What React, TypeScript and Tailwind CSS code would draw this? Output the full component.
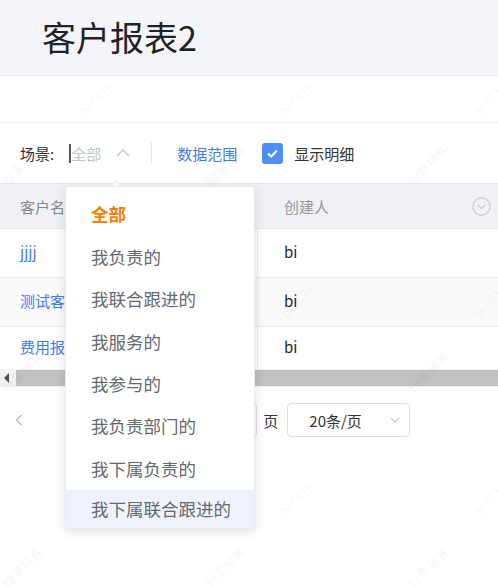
import React from "react";

const marks: { t: string; x: number; y: number; s: number }[] = [];
[99, 301, 499].forEach((y) => {
  [97, 297, 490].forEach((x) => marks.push({ t: "bi 5676", x, y, s: 12 }));
});
[165, 372, 567].forEach((y) => {
  [22, 225, 428].forEach((x) => marks.push({ t: "纷享销客", x, y, s: 13 }));
});

const items = [
  "我负责的",
  "我联合跟进的",
  "我服务的",
  "我参与的",
  "我负责部门的",
  "我下属负责的",
];

export default function App() {
  return (
    <div className="relative w-[498px] h-[587px] overflow-hidden bg-white font-['Noto_Sans_CJK_SC','Liberation_Sans',sans-serif]">
      {/* Header */}
      <div className="h-[76px] bg-[#f4f5f9] border-b border-[#e4e6ee] flex items-center pl-[42px] pb-[2px] text-[34px] text-[#1f2329] leading-none">
        客户报表2
      </div>
      <div className="h-[47px] border-b border-[#eceef4]" />

      {/* Toolbar */}
      <div className="h-[60px] flex items-center pl-5 text-[15px] leading-none">
        <span className="text-[#333]">场景:</span>
        <div className="ml-[15px] flex items-center">
          <span className="w-[2px] h-[19px] bg-[#555]" />
          <span className="text-[#c0c4cc]">全部</span>
          <svg className="ml-[15px]" width="14" height="14" viewBox="0 0 14 14" fill="none">
            <path d="M1 10 L7 4 L13 10" stroke="#c0c4cc" strokeWidth="1.3" />
          </svg>
        </div>
        <span className="ml-[21px] w-[1px] h-[22px] bg-[#e4e7ed]" />
        <span className="ml-[25px] text-[#3f7cf0]">数据范围</span>
        <span className="ml-[25px] w-[21px] h-[21px] rounded-[3px] bg-[#4e8ff5] flex items-center justify-center">
          <svg width="13" height="13" viewBox="0 0 13 13" fill="none">
            <path d="M2 6.5 L5.2 9.5 L11 3.5" stroke="white" strokeWidth="2" />
          </svg>
        </span>
        <span className="ml-[11px] text-[#333]">显示明细</span>
      </div>

      {/* Table */}
      <div className="text-[15px] leading-none">
        <div className="flex h-[45px] bg-[#f0f1f4] border-t border-[#e6e8ee] items-center">
          <div className="w-[258px] pl-5 text-[#888]">客户名称</div>
          <div className="flex-1 pl-[26px] text-[#999]">创建人</div>
          <svg className="mr-[7px]" width="19" height="19" viewBox="0 0 19 19" fill="none">
            <circle cx="9.5" cy="9.5" r="8.6" stroke="#c8cad0" strokeWidth="1.2" />
            <path d="M5.8 8 L9.5 11.6 L13.2 8" stroke="#c8cad0" strokeWidth="1.2" />
          </svg>
        </div>
        {[
          { n: "jjjj", bg: "bg-white", h: "h-[49px]" },
          { n: "测试客户", bg: "bg-[#fafafa]", h: "h-[49px]" },
          { n: "费用报销", bg: "bg-white", h: "h-[43px]" },
        ].map((r, i) => (
          <div key={i} className={`flex items-center border-t border-[#e6e9f0] ${r.bg} ${r.h}`}>
            <div className="w-[258px] h-full flex items-center pl-5 pb-[4px] text-[#3d7cf5] border-r border-[#ebedf2]">{r.n}</div>
            <div className="flex-1 pl-[26px] pb-[4px] text-[#1f2533]">bi</div>
          </div>
        ))}
        {/* Scrollbar */}
        <div className="h-[18px] bg-[#f1f1f1] flex items-center">
          <svg className="ml-[4px]" width="6" height="10" viewBox="0 0 6 10">
            <path d="M5 0 L0 5 L5 10 Z" fill="#505050" />
          </svg>
          <div className="ml-[6px] flex-1 h-[16px] bg-[#c1c1c1]" />
        </div>
      </div>

      {/* Pagination */}
      <div className="mt-[16px] h-[34px] flex items-center text-[15px] leading-none">
        <svg className="ml-[15px]" width="8" height="12" viewBox="0 0 8 12" fill="none">
          <path d="M6.5 1 L1.5 6 L6.5 11" stroke="#b3bccb" strokeWidth="1.4" />
        </svg>
        <span className="ml-[41px] text-[#ff8000]">1</span>
        <span className="ml-[140px] w-[45px] h-[34px] border border-[#dcdfe6] rounded-[4px]" />
        <span className="ml-[6px] text-[#333]">页</span>
        <div className="ml-[9px] w-[123px] h-[34px] border border-[#dcdfe6] rounded-[4px] flex items-center">
          <span className="ml-[21px] text-[#333]">20条/页</span>
          <svg className="ml-auto mr-[9px]" width="10" height="8" viewBox="0 0 10 8" fill="none">
            <path d="M1 2 L5 6 L9 2" stroke="#c0c4cc" strokeWidth="1.1" />
          </svg>
        </div>
      </div>

      {/* Watermarks */}
      <div className="pointer-events-none absolute inset-0 z-10">
        {marks.map((m, i) => (
          <span
            key={i}
            className="absolute whitespace-nowrap text-[rgba(0,0,0,0.06)] leading-none -translate-x-1/2 -translate-y-1/2 -rotate-45"
            style={{ left: m.x, top: m.y, fontSize: m.s }}
          >
            {m.t}
          </span>
        ))}
      </div>

      {/* Dropdown */}
      <div className="absolute left-[65px] top-[186px] z-20 w-[190px]">
        <span className="absolute left-[46px] top-[-4px] w-[10px] h-[10px] bg-white rotate-45 border-l border-t border-[#e9ebf0]" />
        <div className="relative h-[343px] overflow-hidden bg-white rounded-[4px] border border-[#e9ebf0] shadow-[0_3px_12px_rgba(0,0,0,0.12)] pt-[6px] text-[17.5px] leading-none">
          <div className="h-[42.4px] flex items-center pl-[25px] font-bold text-[#ff7f00]">全部</div>
          {items.map((t) => (
            <div key={t} className="h-[42.4px] flex items-center pl-[25px] text-[#666a70]">{t}</div>
          ))}
          <div className="h-[42.4px] flex items-center pl-[25px] pb-[4px] text-[#666a70] bg-[#eef3fb]">我下属联合跟进的</div>
        </div>
      </div>
    </div>
  );
}
